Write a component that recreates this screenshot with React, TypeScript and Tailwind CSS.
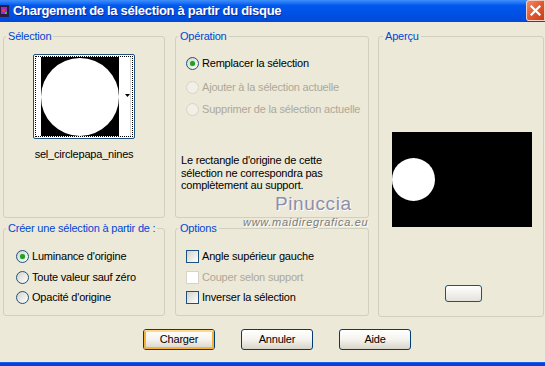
import React from 'react';

function Radio({ label, checked = false, disabled = false, className = '' }: { label: string; checked?: boolean; disabled?: boolean; className?: string }) {
  return (
    <div className={`flex items-center h-[20px] ${className}`}>
      <span
        className={`w-[13px] h-[13px] rounded-full border flex items-center justify-center shrink-0 ${
          disabled ? 'border-[#d6d4c8] bg-[#f1efe6]' : 'border-[#1c5180] bg-linear-to-br from-[#d4d3cc] to-white'
        }`}
      >
        {checked && <span className="w-[5px] h-[5px] rounded-full bg-[#21a121] shadow-[0_0_1px_#5ed65e]" />}
      </span>
      <span className={`ml-[3px] whitespace-nowrap ${disabled ? 'text-[#aca899]' : 'text-black'}`}>{label}</span>
    </div>
  );
}

function Check({ label, disabled = false, className = '' }: { label: string; disabled?: boolean; className?: string }) {
  return (
    <div className={`flex items-center h-[20px] ${className}`}>
      <span
        className={`w-[13px] h-[13px] border shrink-0 ${
          disabled ? 'border-[#d6d4c8] bg-white' : 'border-[#1c5180] bg-linear-to-br from-[#d4d3cc] to-white'
        }`}
      />
      <span className={`ml-[3px] whitespace-nowrap ${disabled ? 'text-[#aca899]' : 'text-black'}`}>{label}</span>
    </div>
  );
}

function Group({ title, className = '', legendClass = 'ml-[2px]', children }: { title: string; className?: string; legendClass?: string; children?: React.ReactNode }) {
  return (
    <fieldset className={`min-w-0 border border-[#d0d0bf] rounded-[3px] ${className}`}>
      <legend className={`px-[2px] leading-[13px] whitespace-nowrap text-[#0046d5] ${legendClass}`}>{title}</legend>
      {children}
    </fieldset>
  );
}

function XpButton({ label, primary = false }: { label: string; primary?: boolean }) {
  return (
    <button className="w-[72px] h-[21px] rounded-[3px] border border-[#003c74] bg-linear-to-b from-white via-[#f4f3ee] to-[#d8d4c8] p-0">
      <div
        className={`w-full h-full rounded-[2px] flex items-center justify-center text-black ${
          primary ? 'border-2 border-[#f6b23a] border-t-[#ffd88a]' : ''
        }`}
      >
        {label}
      </div>
    </button>
  );
}

export default function App() {
  return (
    <div className="relative w-[545px] h-[366px] overflow-hidden bg-[#ece9d8] flex flex-col font-['Liberation_Sans',Arial,sans-serif] text-[11px] leading-[13px] tracking-[-0.2px] text-black">
      {/* title bar */}
      <div className="h-[22px] shrink-0 flex items-center bg-linear-to-b from-[#3d8ffc] via-[#0058ee] via-25% to-[#0049da]">
        <svg width="10" height="14" viewBox="0 0 10 14" className="shrink-0">
          <rect x="0" y="1" width="9" height="12" fill="#2a1a4a" />
          <rect x="1" y="3" width="6" height="7" fill="#9b2fbf" />
          <rect x="2" y="5" width="3" height="3" fill="#e23c3c" />
          <rect x="5" y="8" width="2" height="2" fill="#3cc24a" />
        </svg>
        <span className="ml-[3px] text-white font-bold text-[13px] leading-[16px] tracking-[-0.3px] [text-shadow:1px_1px_0_#0a2a9a] whitespace-nowrap">
          Chargement de la sélection à partir du disque
        </span>
        <div className="ml-auto w-[19px] h-[21px] mt-[-1px] rounded-l-[3px] border border-white/70 bg-linear-to-br from-[#f08a66] via-[#e2592f] to-[#c2401c] flex items-center justify-center">
          <svg width="11" height="11" viewBox="0 0 11 11">
            <path d="M1.5 1.5 L9.5 9.5 M9.5 1.5 L1.5 9.5" stroke="white" strokeWidth="2.2" strokeLinecap="square" />
          </svg>
        </div>
      </div>

      {/* body */}
      <div className="flex pl-[3px] pt-[8px]">
        <div className="w-[162px] flex flex-col gap-[4px]">
          <Group title="Sélection" className="h-[188px]">
            <div className="mt-[11px] mx-auto w-[102px] h-[85px] rounded-[2px] border border-[#1c5180] bg-white p-[1px]">
              <div className="w-full h-full border border-dotted border-black flex items-center pl-[5px] pr-[1px]">
                <div className="w-[79px] h-[79px] bg-black flex items-center justify-center">
                  <div className="w-[78px] h-[78px] rounded-full bg-white" />
                </div>
                <div className="flex-1 h-full flex items-center justify-center border-r border-[#d8d8d8]">
                  <svg width="5" height="3" viewBox="0 0 5 3" className="ml-[6px] mt-[-2px]">
                    <path d="M0 0 H5 L2.5 3 Z" fill="black" />
                  </svg>
                </div>
              </div>
            </div>
            <div className="mt-[9px] text-center">sel_circlepapa_nines</div>
          </Group>
          <Group title="Créer une sélection à partir de :" className="h-[94px]">
            <div className="mt-[11px] pl-[12px]">
              <Radio label="Luminance d'origine" checked />
              <Radio label="Toute valeur sauf zéro" className="mt-[1px]" />
              <Radio label="Opacité d'origine" />
            </div>
          </Group>
        </div>

        <div className="w-[194px] ml-[10px] flex flex-col gap-[4px]">
          <Group title="Opération" className="h-[188px]">
            <div className="mt-[10px] pl-[10px]">
              <Radio label="Remplacer la sélection" checked />
              <Radio label="Ajouter à la sélection actuelle" disabled className="mt-[4px]" />
              <Radio label="Supprimer de la sélection actuelle" disabled className="mt-[2px]" />
            </div>
            <p className="mt-[35px] pl-[5px] leading-[12.5px]">
              Le rectangle d'origine de cette
              <br />
              sélection ne correspondra pas
              <br />
              complètement au support.
            </p>
          </Group>
          <Group title="Options" className="h-[94px]">
            <div className="mt-[11px] pl-[10px]">
              <Check label="Angle supérieur gauche" />
              <Check label="Couper selon support" disabled className="mt-[1px]" />
              <Check label="Inverser la sélection" />
            </div>
          </Group>
        </div>

        <Group title="Aperçu" className="w-[166px] h-[287px] ml-[9px]" legendClass="ml-[4px]">
          <div className="mt-[89px] ml-[13px] w-[140px] h-[95px] bg-black flex items-center">
            <div className="w-[43px] h-[43px] rounded-full bg-white" />
          </div>
          <div className="mt-[58px] ml-[66px] w-[37px] h-[17px] rounded-[3px] border border-[#1c5180] bg-linear-to-b from-white to-[#e4e2da]" />
        </Group>
      </div>

      {/* buttons */}
      <div className="flex pl-[143px] gap-[26px] mt-[12px]">
        <XpButton label="Charger" primary />
        <XpButton label="Annuler" />
        <XpButton label="Aide" />
      </div>

      <div className="mt-auto h-[4px] bg-[#0a3fd8] border-t border-[#1a5cf0]" />

      {/* watermark */}
      <div className="absolute left-[275px] top-[193px] text-[19px] leading-[22px] tracking-[0.6px] text-[#8e8eac] [text-shadow:1px_1px_0_#ffffff] pointer-events-none">
        Pinuccia
      </div>
      <div className="absolute left-[243px] top-[216px] text-[11px] leading-[12px] tracking-[0.7px] italic text-[#7a7a7a] [text-shadow:1px_1px_0_#ffffff] pointer-events-none">
        www.maidiregrafica.eu
      </div>
    </div>
  );
}
